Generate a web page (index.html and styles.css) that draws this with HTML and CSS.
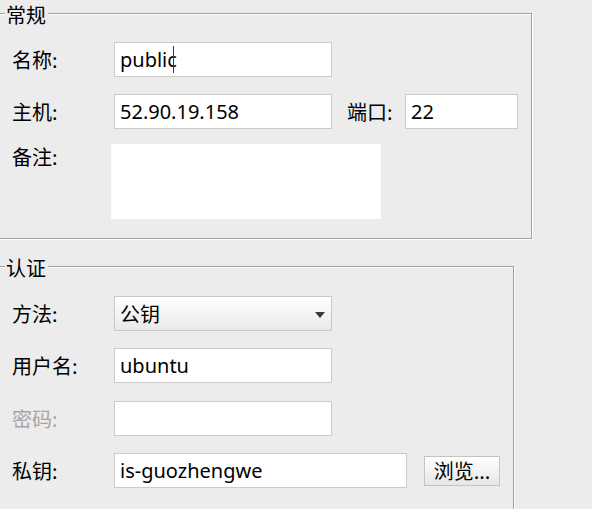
FILE: index.html
```html
<!DOCTYPE html>
<html lang="zh-CN">
<head>
<meta charset="utf-8">
<title>会话设置</title>
<link rel="stylesheet" href="styles.css">
</head>
<body>
<div class="page">
  <section class="group g1">
    <span class="title">常规</span>
    <div class="row">
      <span class="lbl">名称:</span>
      <div class="field w-main">publi<span class="caret"></span>c</div>
    </div>
    <div class="row">
      <span class="lbl">主机:</span>
      <div class="field w-main">52.90.19.158</div>
      <span class="lbl port-lbl">端口:</span>
      <div class="field w-port">22</div>
    </div>
    <div class="row row-top">
      <span class="lbl lbl-top">备注:</span>
      <div class="memo"></div>
    </div>
  </section>

  <section class="group g2">
    <span class="title">认证</span>
    <div class="row">
      <span class="lbl">方法:</span>
      <div class="combo w-main"><span>公钥</span><span class="arrow"></span></div>
    </div>
    <div class="row">
      <span class="lbl">用户名:</span>
      <div class="field w-main">ubuntu</div>
    </div>
    <div class="row row-gap">
      <span class="lbl disabled">密码:</span>
      <div class="field w-main"></div>
    </div>
    <div class="row">
      <span class="lbl">私钥:</span>
      <div class="field w-key">is-guozhengwe</div>
      <div class="button">浏览...</div>
    </div>
  </section>
</div>
</body>
</html>
```

FILE: styles.css
```css
html, body {
  margin: 0;
  padding: 0;
  background: #ececec;
}

body {
  width: 592px;
  height: 509px;
  overflow: hidden;
  font-family: "Noto Sans", "Noto Sans CJK SC", sans-serif;
  font-size: 20px;
  color: #000;
}

.page {
  display: flex;
  flex-direction: column;
  align-items: flex-start;
  padding-top: 13px;
}

.group {
  position: relative;
  box-sizing: border-box;
  margin-left: -2px;
  border: 1px solid #a0a0a0;
  box-shadow: inset 1px 1px 0 #fff, 1px 1px 0 #fff;
  display: flex;
  flex-direction: column;
  gap: 17px;
  padding-left: 13px;
}

.g1 {
  width: 534px;
  padding-top: 28px;
  padding-bottom: 19px;
}

.g1 .row-top {
  margin-top: -2px;
}

.g2 {
  width: 516px;
  margin-top: 27px;
  padding-top: 29px;
  padding-bottom: 40px;
}

.g2 .row-gap {
  margin-top: 1px;
}

.title {
  position: absolute;
  left: 6px;
  top: -10px;
  padding: 0 2px 0 1px;
  background: #ececec;
  line-height: 22px;
  font-family: "Noto Sans CJK SC", sans-serif;
}

.row {
  display: flex;
  align-items: center;
  height: 35px;
}

.row-top {
  align-items: flex-start;
  height: auto;
}

.lbl {
  width: 102px;
  flex: none;
  font-family: "Noto Sans CJK SC", sans-serif;
  line-height: 24px;
}

.lbl-top {
  margin-top: 1px;
}

.disabled {
  color: #a6a6a6;
}

.port-lbl {
  width: 58px;
  margin-left: 15px;
}

.field {
  box-sizing: border-box;
  height: 35px;
  border: 1px solid #cbcbcb;
  background: #fff;
  padding-left: 5px;
  display: flex;
  align-items: center;
  white-space: pre;
  line-height: 24px;
}

.w-main { width: 218px; }
.w-port { width: 113px; }
.w-key { width: 293px; }

.caret {
  display: inline-block;
  width: 0;
  height: 27px;
  border-left: 1px solid #3c3c3c;
  margin-right: -1px;
  position: relative;
  left: 6px;
}

.memo {
  width: 270px;
  height: 75px;
  margin-left: -3px;
  background: #fff;
}

.combo {
  box-sizing: border-box;
  height: 35px;
  border: 1px solid #c8c8c8;
  background: linear-gradient(#ffffff, #f3f3f3 55%, #e9e9e9);
  padding-left: 5px;
  padding-right: 6px;
  display: flex;
  align-items: center;
  justify-content: space-between;
  font-family: "Noto Sans CJK SC", sans-serif;
  line-height: 24px;
}

.arrow {
  width: 0;
  height: 0;
  border-left: 5px solid transparent;
  border-right: 5px solid transparent;
  border-top: 6px solid #3a3a3a;
  margin-top: 2px;
}

.button {
  box-sizing: border-box;
  width: 76px;
  height: 30px;
  margin-left: 17px;
  border: 1px solid #c4c4c4;
  background: linear-gradient(#ffffff, #f0f0f0 60%, #e6e6e6);
  display: flex;
  align-items: center;
  justify-content: center;
  font-family: "Noto Sans CJK SC", sans-serif;
  line-height: 24px;
}
```
